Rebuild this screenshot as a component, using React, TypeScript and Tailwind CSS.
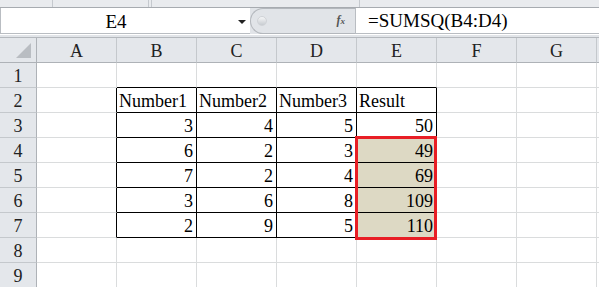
import React from "react";

const cols = ["A", "B", "C", "D", "E", "F", "G"];

type Cell = { v: string; align?: "l" | "r" };

const data: Record<number, Cell[]> = {
  2: [{ v: "Number1", align: "l" }, { v: "Number2", align: "l" }, { v: "Number3", align: "l" }, { v: "Result", align: "l" }],
  3: [{ v: "3" }, { v: "4" }, { v: "5" }, { v: "50" }],
  4: [{ v: "6" }, { v: "2" }, { v: "3" }, { v: "49" }],
  5: [{ v: "7" }, { v: "2" }, { v: "4" }, { v: "69" }],
  6: [{ v: "3" }, { v: "6" }, { v: "8" }, { v: "109" }],
  7: [{ v: "2" }, { v: "9" }, { v: "5" }, { v: "110" }],
};

function GridCell({ row, col }: { row: number; col: number }) {
  // col: 0 = A ... 6 = G
  const inTable = row >= 2 && row <= 7 && col >= 1 && col <= 4;
  const rightBlack = row >= 2 && row <= 7 && col >= 0 && col <= 4;
  const bottomBlack = row >= 1 && row <= 7 && col >= 1 && col <= 4;
  const filled = row >= 4 && row <= 7 && col === 4;
  const cell = inTable ? data[row][col - 1] : null;
  return (
    <div
      className={
        "h-[25px] border-r border-b flex items-end pb-[2px] text-[18px] leading-none text-black [font-family:'Liberation_Serif',serif] " +
        (rightBlack ? "border-r-black " : "border-r-[#dadcdd] ") +
        (bottomBlack ? "border-b-black " : "border-b-[#dadcdd] ") +
        (filled ? "bg-[#ddd9c4] " : "bg-white ") +
        (cell?.align === "l" ? "justify-start pl-[2px]" : "justify-end pr-[3px]")
      }
    >
      {cell?.v}
    </div>
  );
}

export default function App() {
  const rows = [1, 2, 3, 4, 5, 6, 7, 8, 9];
  return (
    <div className="w-[599px] h-[287px] overflow-hidden bg-white [font-family:'Liberation_Serif',serif]">
      {/* ribbon remnant */}
      <div className="h-[8px] bg-[#e9ebee] border-b border-[#a7abb0] flex">
        <div className="w-[53px] border-r border-[#c5c9ce]" />
        <div className="w-[96px] border-r border-[#c5c9ce]" />
        <div className="w-[3px] border-r border-[#c5c9ce]" />
        <div className="w-[208px] border-r border-[#c5c9ce]" />
      </div>

      {/* formula bar */}
      <div className="h-[26px] flex bg-[#e1e4e8]">
        <div className="w-[250px] bg-white border-l border-b border-[#b9bdc2] flex items-center relative">
          <div className="w-[230px] text-center text-[19px] leading-none pt-[1px] [font-family:'Liberation_Serif',serif]">E4</div>
          <div className="absolute left-[237px] top-[12px] w-0 h-0 border-l-[4px] border-r-[4px] border-t-[4px] border-l-transparent border-r-transparent border-t-[#222]" />
        </div>
        <div className="w-[105px] flex items-stretch">
          <div className="relative flex-1 rounded-l-[14px] bg-[#e1e4e8] border border-r-0 border-[#b3b7bc]">
            <div className="absolute left-[6px] top-[7px] w-[10px] h-[10px] rounded-full bg-gradient-to-b from-[#f5f6f7] to-[#c8ccd1] border border-[#d0d3d7]" />
            <div className="absolute right-[10px] top-[5px] text-[12px] text-[#555] italic font-bold leading-none [font-family:'Liberation_Serif',serif]">
              f<span className="text-[9px]">x</span>
            </div>
          </div>
        </div>
        <div className="flex-1 bg-white border-l border-b border-[#b9bdc2] flex items-center pl-[12px] text-[19px] leading-none [font-family:'Liberation_Serif',serif]">
          =SUMSQ(B4:D4)
        </div>
      </div>
      <div className="h-[4px] bg-[#e1e4e8] border-t border-white border-b border-b-[#b4b8bd]" />

      {/* grid */}
      <div className="relative grid grid-cols-[37px_repeat(7,80px)_1fr]">
        {/* header row */}
        <div className="h-[25px] bg-[#e4e7eb] border-r border-b border-[#aeb2b7] relative">
          <div className="absolute right-[5px] bottom-[4px] w-[15px] h-[15px] bg-[#b9bdc2] [clip-path:polygon(100%_0,100%_100%,0_100%)]" />
        </div>
        {cols.map((c) => (
          <div
            key={c}
            className="h-[25px] bg-[#e4e7eb] border-r border-b border-r-[#c4c8cc] border-b-[#aeb2b7] flex items-center justify-center text-[18px] leading-none text-[#222] pt-[1px] [font-family:'Liberation_Serif',serif]"
          >
            {c}
          </div>
        ))}
        <div className="h-[25px] bg-[#e4e7eb] border-b border-[#aeb2b7]" />

        {rows.map((r) => (
          <React.Fragment key={r}>
            <div className="h-[25px] bg-[#e4e7eb] border-r border-b border-r-[#aeb2b7] border-b-[#c4c8cc] flex items-center justify-center text-[18px] leading-none text-[#222] pt-[1px] [font-family:'Liberation_Serif',serif]">
              {r}
            </div>
            {cols.map((_, ci) => (
              <GridCell key={ci} row={r} col={ci} />
            ))}
            <div className="h-[25px] bg-white border-b border-[#dadcdd]" />
          </React.Fragment>
        ))}

        {/* selection outline E4:E7 */}
        <div className="absolute left-[355px] top-[98px] w-[82px] h-[104px] border-[3px] border-[#e81e25] pointer-events-none" />
      </div>
    </div>
  );
}
